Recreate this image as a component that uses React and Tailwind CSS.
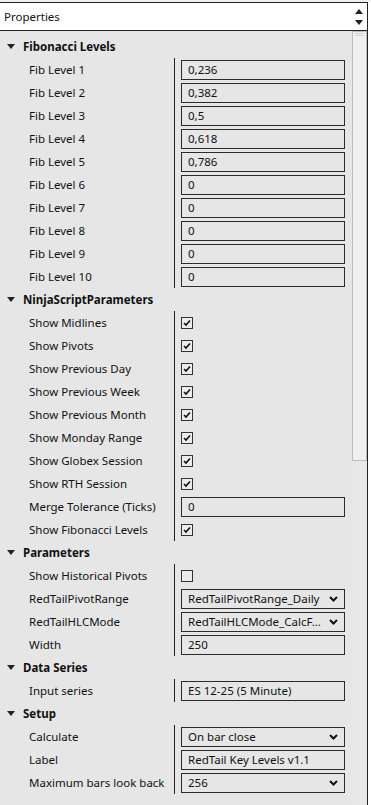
const FONT = { fontFamily: '"Noto Sans", "Open Sans", sans-serif' }

const SECTIONS = [
  {
    title: 'Fibonacci Levels',
    rows: [
      ['Fib Level 1', 'text', '0,236'],
      ['Fib Level 2', 'text', '0,382'],
      ['Fib Level 3', 'text', '0,5'],
      ['Fib Level 4', 'text', '0,618'],
      ['Fib Level 5', 'text', '0,786'],
      ['Fib Level 6', 'text', '0'],
      ['Fib Level 7', 'text', '0'],
      ['Fib Level 8', 'text', '0'],
      ['Fib Level 9', 'text', '0'],
      ['Fib Level 10', 'text', '0'],
    ],
  },
  {
    title: 'NinjaScriptParameters',
    rows: [
      ['Show Midlines', 'check', true],
      ['Show Pivots', 'check', true],
      ['Show Previous Day', 'check', true],
      ['Show Previous Week', 'check', true],
      ['Show Previous Month', 'check', true],
      ['Show Monday Range', 'check', true],
      ['Show Globex Session', 'check', true],
      ['Show RTH Session', 'check', true],
      ['Merge Tolerance (Ticks)', 'text', '0'],
      ['Show Fibonacci Levels', 'check', true],
    ],
  },
  {
    title: 'Parameters',
    rows: [
      ['Show Historical Pivots', 'check', false],
      ['RedTailPivotRange', 'select', 'RedTailPivotRange_Daily'],
      ['RedTailHLCMode', 'select', 'RedTailHLCMode_CalcF...'],
      ['Width', 'text', '250'],
    ],
  },
  {
    title: 'Data Series',
    rows: [['Input series', 'text', 'ES 12-25 (5 Minute)']],
  },
  {
    title: 'Setup',
    rows: [
      ['Calculate', 'select', 'On bar close'],
      ['Label', 'text', 'RedTail Key Levels v1.1'],
      ['Maximum bars look back', 'select', '256'],
    ],
  },
]

function Checkbox({ checked }) {
  return (
    <div className="w-[12px] h-[12px] border border-[#333] bg-[#ececec] flex items-center justify-center">
      {checked && (
        <svg width="8" height="8" viewBox="0 0 8 8">
          <path d="M1 4 L3 6 L7 1.5" fill="none" stroke="#111" strokeWidth="1.6" />
        </svg>
      )}
    </div>
  )
}

function Value({ kind, value }) {
  if (kind === 'check') {
    return (
      <div className="h-[23px] flex items-center">
        <Checkbox checked={value} />
      </div>
    )
  }
  return (
    <div className="h-[23px] pt-[2px]">
      <div className="w-[164px] h-[20px] border border-[#2b2b2b] flex items-center pl-[6px] pr-[6px]">
        <span className="flex-1 whitespace-nowrap overflow-hidden leading-[18px]">{value}</span>
        {kind === 'select' && (
          <svg width="9" height="6" viewBox="0 0 9 6" className="ml-[4px] shrink-0">
            <path d="M1 1 L4.5 4.5 L8 1" fill="none" stroke="#111" strokeWidth="2" />
          </svg>
        )}
      </div>
    </div>
  )
}

function Section({ title, rows }) {
  return (
    <div>
      <div className="h-[23px] flex items-center font-bold">
        <svg width="8" height="5" viewBox="0 0 8 5" className="ml-[7px] mr-[8px]">
          <path d="M0 0 H8 L4 5 Z" fill="#222" />
        </svg>
        <span>{title}</span>
      </div>
      {rows.map(([label, kind, value]) => (
        <div key={label} className="flex h-[23px]">
          <div className="w-[174px] pl-[29px] flex items-center whitespace-nowrap">{label}</div>
          <div className="border-l border-[#222] pl-[6px]">
            <Value kind={kind} value={value} />
          </div>
        </div>
      ))}
    </div>
  )
}

export default function App() {
  return (
    <div className="w-[371px] h-[805px] bg-white overflow-hidden text-[11.5px] text-[#111]" style={FONT}>
      <div className="h-[2px] bg-[#f0f0f0]" />
      <div className="w-[368px] border-r border-[#222] h-[803px] flex flex-col">
        <div className="h-[29px] bg-white border-y border-[#222] flex items-center">
          <span className="pl-[4px] flex-1">Properties</span>
          <div className="w-[15px] flex flex-col items-center gap-[6px] mr-[1px]">
            <svg width="8" height="5" viewBox="0 0 8 5"><path d="M0 5 H8 L4 0 Z" fill="#222" /></svg>
            <svg width="8" height="5" viewBox="0 0 8 5"><path d="M0 0 H8 L4 5 Z" fill="#222" /></svg>
          </div>
        </div>
        <div className="flex flex-1 min-h-0">
          <div className="w-[352px] bg-[#e6e6e6] pt-[4px]">
            {SECTIONS.map((s) => (
              <Section key={s.title} {...s} />
            ))}
          </div>
          <div className="w-[15px] bg-[#e8e8e8] flex flex-col">
            <div className="h-[430px] bg-[#f0f0f0] border border-[#bdbdbd] flex flex-col items-center pt-[1px] gap-[1px]">
              <div className="w-[9px] h-px bg-[#cfcfcf]" />
              <div className="w-[9px] h-px bg-[#cfcfcf]" />
            </div>
          </div>
        </div>
      </div>
    </div>
  )
}
